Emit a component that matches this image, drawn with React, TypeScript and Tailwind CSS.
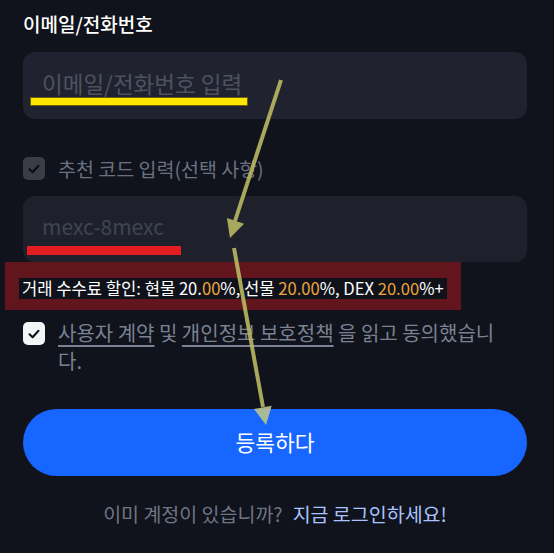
import React from "react";

const font = { fontFamily: '"Noto Sans CJK KR", "Noto Sans", sans-serif' };

function Check({ light }: { light?: boolean }) {
  return (
    <div
      className={
        "w-[22px] h-[23px] rounded-[5px] flex items-center justify-center shrink-0 " +
        (light ? "bg-[#f4f5f7]" : "bg-[#3a3d46]")
      }
    >
      <svg width="14" height="14" viewBox="0 0 14 14" fill="none">
        <path d="M2.5 7.3 L5.6 10.2 L11.5 3.8" stroke="#0b0d12" strokeWidth="2" strokeLinecap="round" strokeLinejoin="round" />
      </svg>
    </div>
  );
}

export default function App() {
  return (
    <div className="relative w-[554px] h-[553px] overflow-hidden bg-[#10131b]" style={font}>
      <div className="flex flex-col pl-[23px] pr-[27px] pt-[11px]">
        <div className="text-[19px] leading-[26px] font-medium text-white">이메일/전화번호</div>

        <div className="relative mt-[15px] h-[67px] rounded-[12px] bg-[#20232f] flex items-center pl-[19px] pb-[4px]">
          <span className="text-[22.5px] text-[#4d5260]">이메일/전화번호 입력</span>
          <div className="absolute left-[7px] top-[45px] w-[218px] h-[9px] bg-[#ffe600] border border-[#6b5e10]" />
        </div>

        <div className="mt-[38px] flex items-center gap-[13px]">
          <Check />
          <span className="text-[19.5px] leading-[23px] text-[#6b7080]">추천 코드 입력(선택 사항)</span>
        </div>

        <div className="relative mt-[16px] h-[66px] rounded-[12px] bg-[#1e212c] flex items-center pl-[19px] pb-[4px]">
          <span className="text-[21px] text-[#3f4452]">mexc-8mexc</span>
          <div className="absolute left-[4px] top-[50px] w-[154px] h-[9px] bg-[#e31c22]" />
        </div>

        <div className="-ml-[18px] w-[456px] h-[48px] bg-[#62151c] pl-[14px] pt-[14px]">
          <div className="inline-block bg-[#0f121a] px-[3px] h-[21px] text-[16.6px] leading-[21px] text-white whitespace-nowrap">
            거래 수수료 할인: 현물 20.<span className="text-[#eea53a]">00</span>%, 선물{" "}
            <span className="text-[#eea53a]">20.00</span>%, DEX <span className="text-[#eea53a]">20.00</span>%+
          </div>
        </div>

        <div className="mt-[12px] flex items-start gap-[13px]">
          <Check light />
          <p className="w-[445px] text-[20px] leading-[28px] -mt-[3px] text-[#7a8192]">
            <span className="underline underline-offset-[4px]">사용자 계약</span> 및{" "}
            <span className="underline underline-offset-[4px]"> 개인정보 보호정책</span> 을 읽고 동의했습니다.
          </p>
        </div>

        <button className="mt-[34px] h-[67px] w-full rounded-full bg-[#1766ff] text-white text-[21.5px] flex items-center justify-center">
          등록하다
        </button>

        <div className="mt-[25px] flex justify-center items-center gap-[10px] text-[19.5px] leading-[26px]">
          <span className="text-[#6f7585]">이미 계정이 있습니까?</span>
          <span className="text-[#a8c3ff]">지금 로그인하세요!</span>
        </div>
      </div>

      <svg className="absolute inset-0 pointer-events-none" width="554" height="553" viewBox="0 0 554 553">
        <g opacity="0.9">
          <line x1="281" y1="80" x2="235" y2="221" stroke="#b9b864" strokeWidth="4" />
          <polygon points="230,238 244.1,223.7 226.9,218.1" fill="#b9b864" />
          <line x1="234" y1="248" x2="263" y2="407" stroke="#b9b864" strokeWidth="4" />
          <polygon points="266,425 271.7,405.7 253.9,408.9" fill="#b9c48e" />
        </g>
      </svg>
    </div>
  );
}
